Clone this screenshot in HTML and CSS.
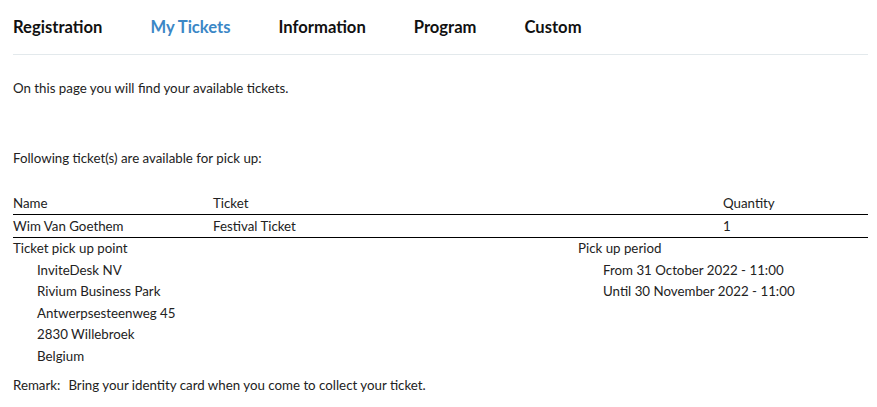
FILE: index.html
```html
<!DOCTYPE html>
<html lang="en">
<head>
<meta charset="utf-8">
<title>My Tickets</title>
<link rel="stylesheet" href="styles.css">
</head>
<body>
<div class="page">
  <nav class="nav">
    <a class="nav-item">Registration</a>
    <a class="nav-item active">My Tickets</a>
    <a class="nav-item">Information</a>
    <a class="nav-item">Program</a>
    <a class="nav-item">Custom</a>
  </nav>
  <p class="intro">On this page you will find your available tickets.</p>
  <p class="lead">Following ticket(s) are available for pick up:</p>
  <table class="tickets">
    <thead>
      <tr><th class="c-name">Name</th><th class="c-ticket">Ticket</th><th class="c-qty">Quantity</th></tr>
    </thead>
    <tbody>
      <tr><td>Wim Van Goethem</td><td>Festival Ticket</td><td>1</td></tr>
    </tbody>
  </table>
  <div class="pickup">
    <div class="pickup-col">
      <div class="label">Ticket pick up point</div>
      <div class="indent">
        <div class="line">InviteDesk NV</div>
        <div class="line">Rivium Business Park</div>
        <div class="line">Antwerpsesteenweg 45</div>
        <div class="line">2830 Willebroek</div>
        <div class="line">Belgium</div>
      </div>
    </div>
    <div class="pickup-col">
      <div class="label">Pick up period</div>
      <div class="indent">
        <div class="line">From 31 October 2022 - 11:00</div>
        <div class="line">Until 30 November 2022 - 11:00</div>
      </div>
    </div>
  </div>
  <p class="remark"><span class="remark-label">Remark:</span>Bring your identity card when you come to collect your ticket.</p>
</div>
</body>
</html>
```
FILE: styles.css
```css
html, body {
  margin: 0;
  padding: 0;
  background: #fff;
}
body {
  font-family: "Lato", "Open Sans", sans-serif;
  font-size: 13.3px;
  color: #222;
}
.page {
  padding: 0 9px 0 13px;
}
.nav {
  display: flex;
  align-items: center;
  gap: 48px;
  height: 54px;
  border-bottom: 1px solid #e3e9ec;
}
.nav-item {
  font-size: 16.6px;
  font-weight: bold;
  color: #111;
  text-decoration: none;
}
.nav-item.active {
  color: #3b87c6;
}
.intro {
  margin: 22px 0 0;
  line-height: 22px;
}
.lead {
  margin: 48px 0 0;
  line-height: 22px;
}
.tickets {
  margin-top: 23px;
  width: 100%;
  border-collapse: collapse;
}
.tickets th, .tickets td {
  padding: 0;
  text-align: left;
  font-weight: normal;
  line-height: 22px;
  border-bottom: 1px solid #000;
}
.c-name { width: 200px; }
.c-ticket { width: 510px; }
.pickup {
  display: grid;
  grid-template-columns: 565px 1fr;
}
.label, .line {
  line-height: 21.5px;
}
.indent {
  padding-left: 24px;
}
.pickup-col + .pickup-col .indent {
  padding-left: 25px;
}
.remark {
  margin: 7px 0 0;
  line-height: 22px;
}
.remark-label {
  margin-right: 8px;
}
```
